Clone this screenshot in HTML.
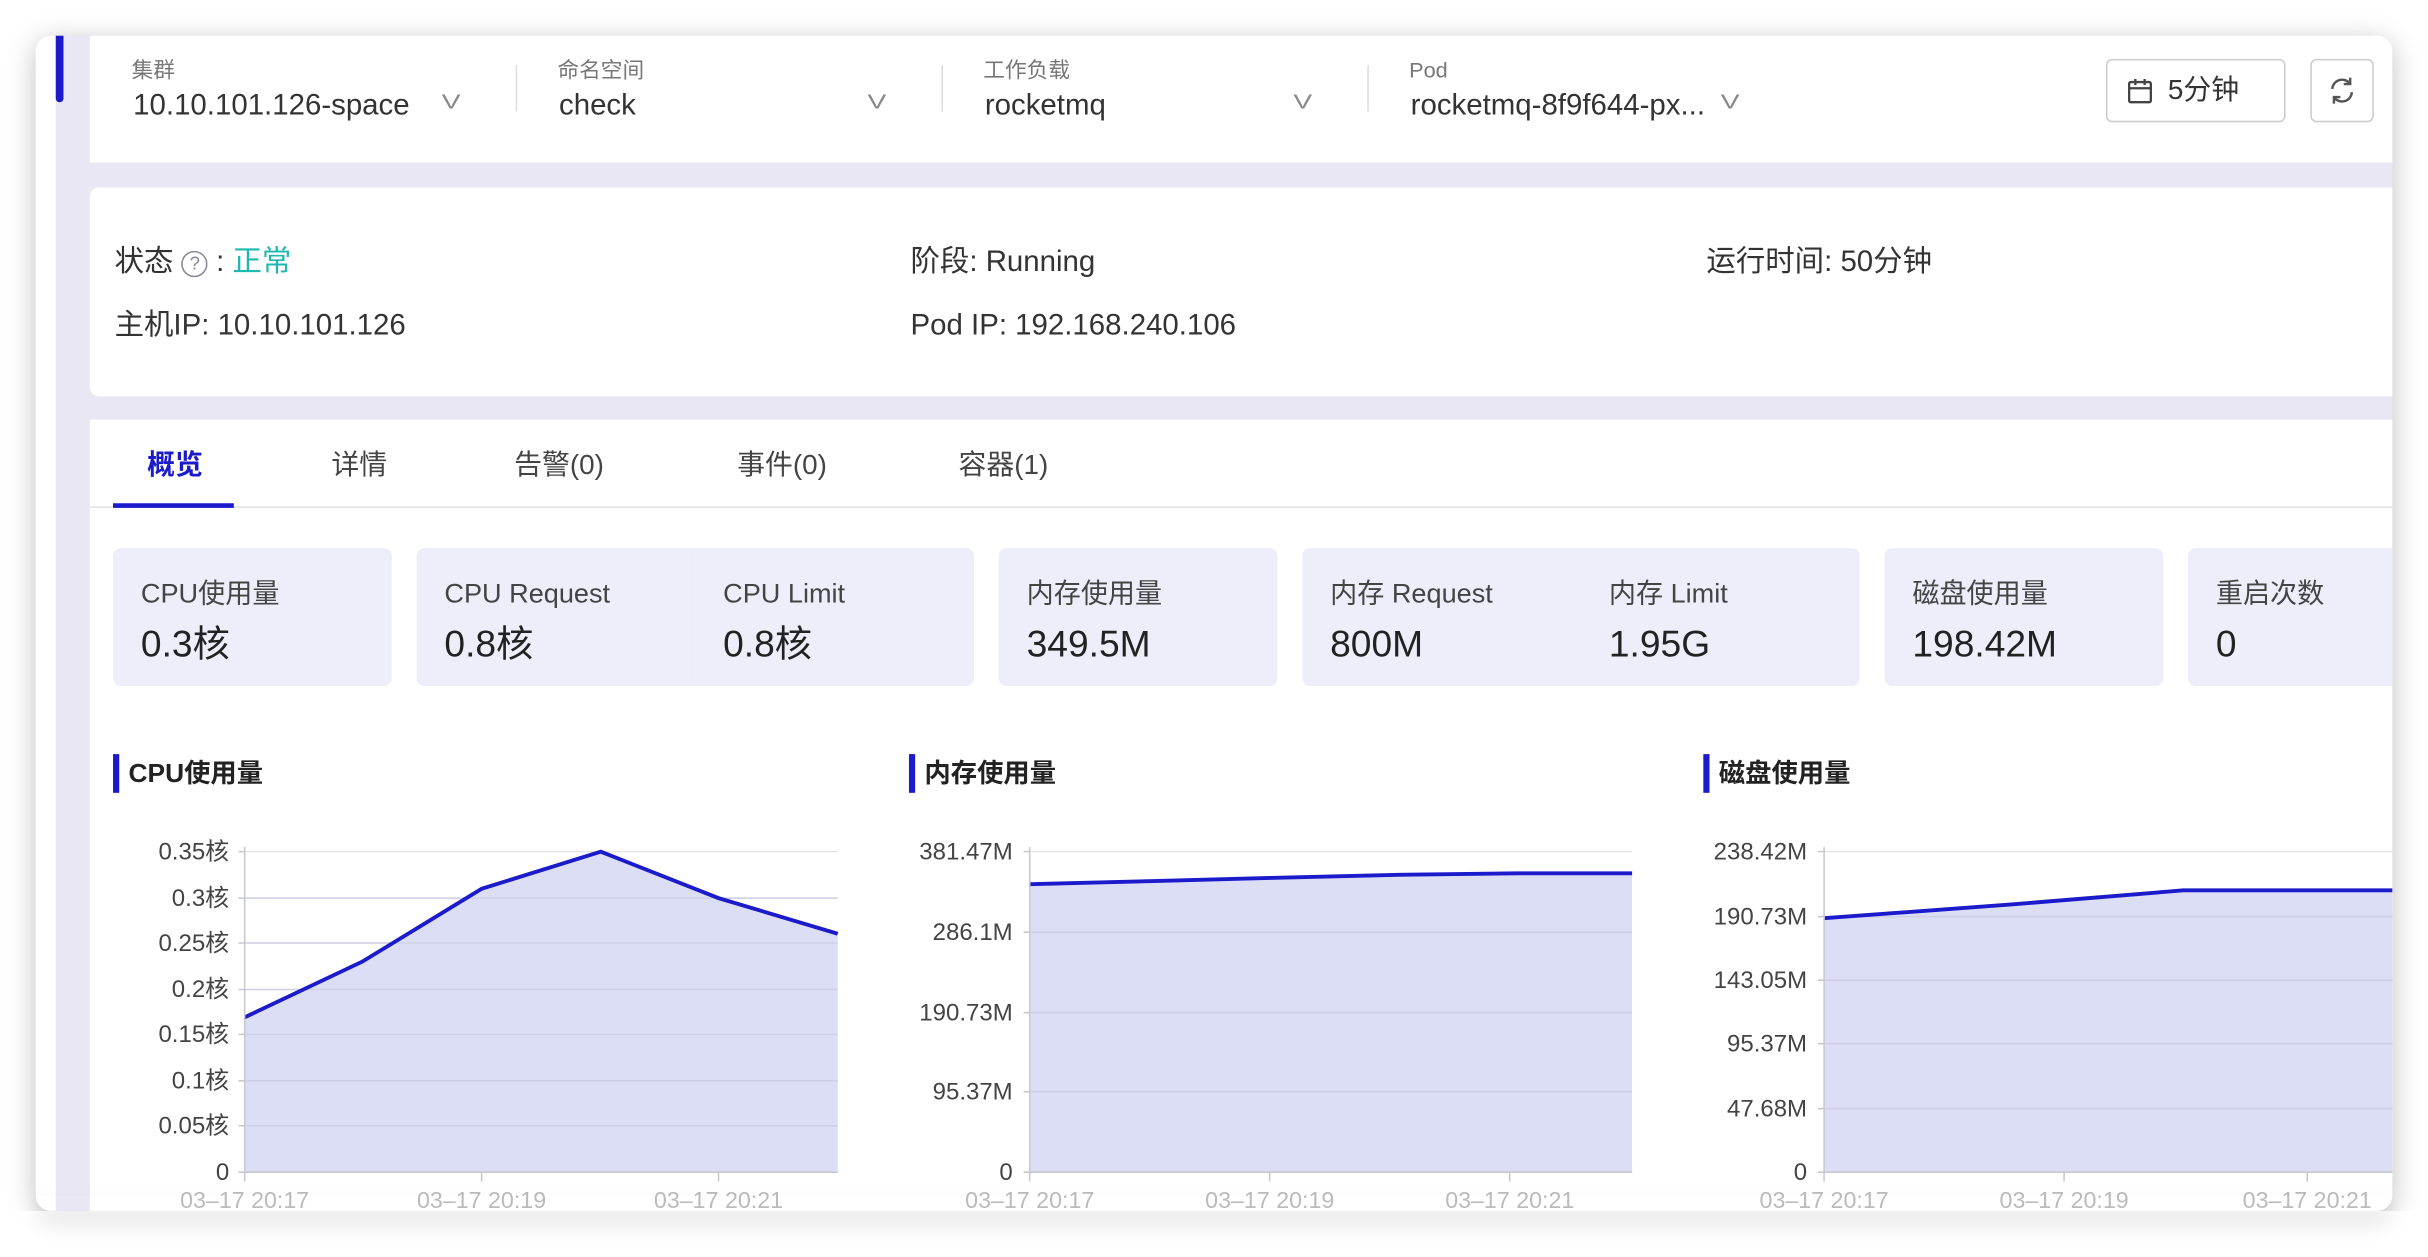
<!DOCTYPE html>
<html><head><meta charset="utf-8"><style>
*{margin:0;padding:0;box-sizing:border-box}
html,body{width:2428px;height:1246px;overflow:hidden;background:#fff}
#s{position:absolute;left:0;top:0;width:1568px;height:805px;transform:scale(1.54847);transform-origin:0 0;font-family:"Liberation Sans","Noto Sans CJK SC",sans-serif;color:#333}
.win{position:absolute;left:23px;top:23px;width:1522px;height:759px;border-radius:10px;background:#e8e7f3;overflow:hidden;box-shadow:0 4px 18px rgba(0,0,0,.25)}
.a{position:absolute}
.lab{font-size:14px;color:#777;line-height:16px}
.val{font-size:19px;color:#333;line-height:22px}
.sep{width:1px;height:30px;background:#ddd;top:42px}
.chev{font-size:13px;color:#888;transform:scaleX(1.4);line-height:16px}
.card{position:absolute;top:354px;height:89px;background:#eeeefb;border-radius:5px;padding:19px 0 0 18px}
.card .t{font-size:17.5px;color:#444;line-height:20px;white-space:nowrap}
.card .v{font-size:24px;color:#222;margin-top:10px;line-height:28px;white-space:nowrap}
.tab{position:absolute;top:290px;font-size:18px;color:#444;line-height:20px}
.info{position:absolute;font-size:19px;line-height:22px;white-space:nowrap}
.ct{position:absolute;top:487px;font-size:17px;font-weight:bold;color:#222;border-left:4px solid #1b1bcc;padding-left:6px;height:25px;line-height:25px}
</style></head><body><div id="s">
<div class="win">
 <div class="a" style="left:0;top:0;width:35px;height:759px;background:#e8e7f3"></div>
 <div class="a" style="left:0;top:0;width:13px;height:759px;background:#fff"></div>
 <div class="a" style="left:13px;top:0;width:5px;height:43px;background:#1b1bcc;border-radius:0 0 3px 3px"></div>
 <div class="a" style="left:35px;top:0;width:1487px;height:82px;background:#fff"></div>
 <div class="a" style="left:35px;top:98px;width:1487px;height:135px;background:#fff;border-radius:6px 0 0 6px"></div>
 <div class="a" style="left:35px;top:248px;width:1487px;height:520px;background:#fff"></div>
</div>
<!-- header -->
<div class="a lab" style="left:85px;top:37px">集群</div>
<div class="a val" style="left:86px;top:58px">10.10.101.126-space</div>
<div class="a chev" style="left:287px;top:58px">V</div>
<div class="a sep" style="left:333px"></div>
<div class="a lab" style="left:360px;top:37px">命名空间</div>
<div class="a val" style="left:361px;top:58px">check</div>
<div class="a chev" style="left:562px;top:58px">V</div>
<div class="a sep" style="left:608px"></div>
<div class="a lab" style="left:635px;top:37px">工作负载</div>
<div class="a val" style="left:636px;top:58px">rocketmq</div>
<div class="a chev" style="left:837px;top:58px">V</div>
<div class="a sep" style="left:883px"></div>
<div class="a lab" style="left:910px;top:37px">Pod</div>
<div class="a val" style="left:911px;top:58px">rocketmq-8f9f644-px...</div>
<div class="a chev" style="left:1113px;top:58px">V</div>
<div class="a" style="left:1360px;top:38px;width:116px;height:41px;border:1px solid #ccc;border-radius:4px"></div>
<svg class="a" style="left:1373px;top:50px" width="18" height="18" viewBox="0 0 18 18" fill="none" stroke="#444" stroke-width="1.5"><rect x="2" y="3" width="14" height="13" rx="1"/><path d="M2 7h14M6 1v4M12 1v4"/></svg>
<div class="a" style="left:1400px;top:48px;font-size:18px;line-height:20px;color:#333">5分钟</div>
<div class="a" style="left:1492px;top:38px;width:41px;height:41px;border:1px solid #ccc;border-radius:4px"></div>
<svg class="a" style="left:1502px;top:48px" width="21" height="21" viewBox="0 0 20 20" fill="none" stroke="#555" stroke-width="1.5"><path d="M4 9a6 6 0 0 1 11-3M16 11a6 6 0 0 1-11 3"/><path d="M15 2v4h-4M5 18v-4h4"/></svg>
<!-- info -->
<div class="info" style="left:74px;top:159px">状态 <span style="display:inline-block;width:17px;height:17px;border:1.5px solid #889;border-radius:50%;font-size:12px;text-align:center;line-height:14px;color:#889;vertical-align:1px">?</span> : <span style="color:#1fb8b0">正常</span></div>
<div class="info" style="left:74px;top:200px">主机IP: 10.10.101.126</div>
<div class="info" style="left:588px;top:159px">阶段: Running</div>
<div class="info" style="left:588px;top:200px">Pod IP: 192.168.240.106</div>
<div class="info" style="left:1102px;top:159px">运行时间: 50分钟</div>
<!-- tabs -->
<div class="a" style="left:58px;top:327px;width:1487px;height:1px;background:#e3e3e8"></div>
<div class="tab" style="left:95px;color:#1b1bcc;font-weight:bold">概览</div>
<div class="a" style="left:73px;top:325px;width:78px;height:3px;background:#1b1bcc"></div>
<div class="tab" style="left:214px">详情</div>
<div class="tab" style="left:332px">告警(0)</div>
<div class="tab" style="left:476px">事件(0)</div>
<div class="tab" style="left:619px">容器(1)</div>
<!-- cards -->
<div class="card" style="left:73px;width:180px"><div class="t">CPU使用量</div><div class="v">0.3核</div></div>
<div class="card" style="left:269px;width:180px;border-radius:5px 0 0 5px"><div class="t">CPU Request</div><div class="v">0.8核</div></div>
<div class="card" style="left:449px;width:180px;border-radius:0 5px 5px 0"><div class="t">CPU Limit</div><div class="v">0.8核</div></div>
<div class="card" style="left:645px;width:180px"><div class="t">内存使用量</div><div class="v">349.5M</div></div>
<div class="card" style="left:841px;width:180px;border-radius:5px 0 0 5px"><div class="t">内存 Request</div><div class="v">800M</div></div>
<div class="card" style="left:1021px;width:180px;border-radius:0 5px 5px 0"><div class="t">内存 Limit</div><div class="v">1.95G</div></div>
<div class="card" style="left:1217px;width:180px"><div class="t">磁盘使用量</div><div class="v">198.42M</div></div>
<div class="card" style="left:1413px;width:132px;border-radius:5px 0 0 5px"><div class="t">重启次数</div><div class="v">0</div></div>
<div class="ct" style="left:73px">CPU使用量</div>
<div class="ct" style="left:587px">内存使用量</div>
<div class="ct" style="left:1100px">磁盘使用量</div>
<svg class="a" style="left:0;top:0" width="1545" height="782" viewBox="0 0 1545 782" font-family="Liberation Sans, Noto Sans CJK SC, sans-serif" font-size="14">
<g stroke="#e6e6ea"><path d="M158 550H541M158 580H541M158 609H541M158 639H541M158 668H541M158 698H541M158 727H541"/><path d="M665 550H1054M665 602H1054M665 654H1054M665 705H1054"/><path d="M1178 550H1545M1178 592H1545M1178 633H1545M1178 674H1545M1178 716H1545"/></g>
<path d="M158 657L234 621L311 574L388 550L464 580L541 603V757H158Z" fill="#dcdef5"/>
<path d="M665 571L745 569L820 567L900 565L980 564L1054 564V757H665Z" fill="#dcdef5"/>
<path d="M1178 593L1300 584L1410 575L1545 575V757H1178Z" fill="#dcdef5"/>
<g stroke="#cfd0e6"><path d="M158 580H541M158 609H541M158 639H541M158 668H541M158 698H541M158 727H541"/><path d="M665 602H1054M665 654H1054M665 705H1054"/><path d="M1178 592H1545M1178 633H1545M1178 674H1545M1178 716H1545"/></g>
<g fill="none" stroke="#1b1bcc" stroke-width="2.5"><path d="M158 657L234 621L311 574L388 550L464 580L541 603"/><path d="M665 571L745 569L820 567L900 565L980 564L1054 564"/><path d="M1178 593L1300 584L1410 575L1545 575"/></g>
<g stroke="#c8c8d0"><path d="M158 547V763M154 757H541M311 757V763M464 757V763"/><path d="M665 547V763M661 757H1054M820 757V763M975 757V763"/><path d="M1178 547V763M1174 757H1545M1333 757V763M1490 757V763"/>
<path d="M154 550h4M154 580h4M154 609h4M154 639h4M154 668h4M154 698h4M154 727h4M661 550h4M661 602h4M661 654h4M661 705h4M1174 550h4M1174 592h4M1174 633h4M1174 674h4M1174 716h4"/></g>
<g fill="#444" text-anchor="end" font-size="15.5">
<text x="148" y="555">0.35核</text><text x="148" y="585">0.3核</text><text x="148" y="614">0.25核</text><text x="148" y="644">0.2核</text><text x="148" y="673">0.15核</text><text x="148" y="703">0.1核</text><text x="148" y="732">0.05核</text><text x="148" y="762">0</text>
<text x="654" y="555">381.47M</text><text x="654" y="607">286.1M</text><text x="654" y="659">190.73M</text><text x="654" y="710">95.37M</text><text x="654" y="762">0</text>
<text x="1167" y="555">238.42M</text><text x="1167" y="597">190.73M</text><text x="1167" y="638">143.05M</text><text x="1167" y="679">95.37M</text><text x="1167" y="721">47.68M</text><text x="1167" y="762">0</text></g>
<g fill="#bbb" text-anchor="middle" font-size="15">
<text x="158" y="780">03–17 20:17</text><text x="311" y="780">03–17 20:19</text><text x="464" y="780">03–17 20:21</text>
<text x="665" y="780">03–17 20:17</text><text x="820" y="780">03–17 20:19</text><text x="975" y="780">03–17 20:21</text>
<text x="1178" y="780">03–17 20:17</text><text x="1333" y="780">03–17 20:19</text><text x="1490" y="780">03–17 20:21</text></g>
</svg>
<div class="a" style="left:0;top:782px;width:1568px;height:30px;background:#fff"></div>
<div class="a" style="left:23px;top:772px;width:1522px;height:10px;border-radius:0 0 10px 10px;box-shadow:0 8px 14px rgba(0,0,0,.12)"></div>
</div></body></html>
